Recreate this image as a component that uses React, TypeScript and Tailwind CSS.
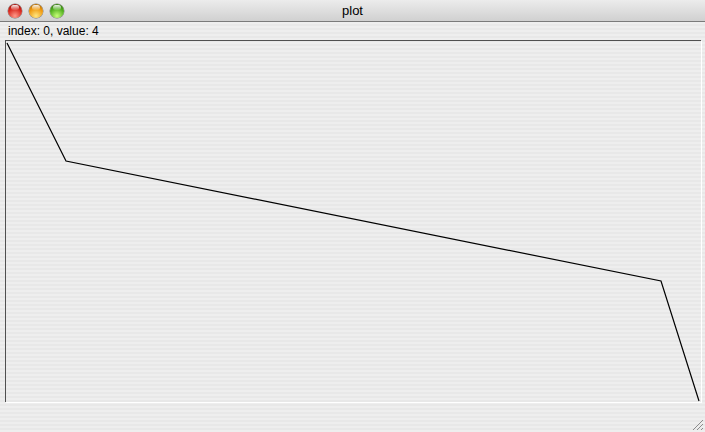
import React from "react";

const points: [number, number][] = [
  [1, 2],
  [60, 120],
  [655, 240],
  [693, 360],
];

function Light({ light, mid, dark }: { light: string; mid: string; dark: string }) {
  return (
    <div
      className="relative h-[14px] w-[14px] rounded-full"
      style={{
        background: `radial-gradient(circle at 50% 85%, ${light} 0%, ${mid} 55%, ${dark} 100%)`,
        boxShadow: "0 0 0 0.5px rgba(0,0,0,0.45)",
      }}
    >
      <div className="absolute left-[3px] top-[1px] h-[5px] w-[8px] rounded-full bg-[linear-gradient(rgba(255,255,255,0.9),rgba(255,255,255,0.1))]" />
    </div>
  );
}

export default function App() {
  return (
    <div className="flex h-[432px] w-[705px] flex-col overflow-hidden font-['Liberation_Sans',sans-serif]">
      <div className="relative flex h-[22px] shrink-0 items-center border-b border-[#7a7a7a] bg-[linear-gradient(#ececec,#d0d0d0)] px-[8px]">
        <div className="flex gap-[7px]">
          <Light light="#ff9a8a" mid="#d8281e" dark="#8a0e08" />
          <Light light="#ffe680" mid="#f09a10" dark="#9a5a00" />
          <Light light="#c8ff7a" mid="#52b020" dark="#2a6a08" />
        </div>
        <div className="absolute inset-x-0 top-[3px] text-center text-[13px] leading-[16px] text-black">plot</div>
      </div>
      <div className="relative flex flex-1 flex-col bg-[repeating-linear-gradient(#eeeeee_0px,#eeeeee_2px,#e8e8e8_2px,#e8e8e8_4px)]">
        <div className="pl-[8px] pt-[2px] text-[12px] leading-[15px] text-black">index: 0, value: 4</div>
        <div className="ml-[5px] mt-[1px] h-[362px] w-[696px] border-l border-t border-[#505050] shadow-[1px_1px_0_#ffffff]">
          <svg width="695" height="361" className="block">
            <polyline
              points={points.map((p) => p.join(",")).join(" ")}
              fill="none"
              stroke="#000"
              strokeWidth="1.2"
            />
          </svg>
        </div>
        <svg width="14" height="14" className="absolute bottom-[1px] right-[1px]">
          <line x1="3" y1="13" x2="13" y2="3" stroke="#8c8c8c" />
          <line x1="7" y1="13" x2="13" y2="7" stroke="#8c8c8c" />
          <line x1="11" y1="13" x2="13" y2="11" stroke="#8c8c8c" />
        </svg>
      </div>
    </div>
  );
}
